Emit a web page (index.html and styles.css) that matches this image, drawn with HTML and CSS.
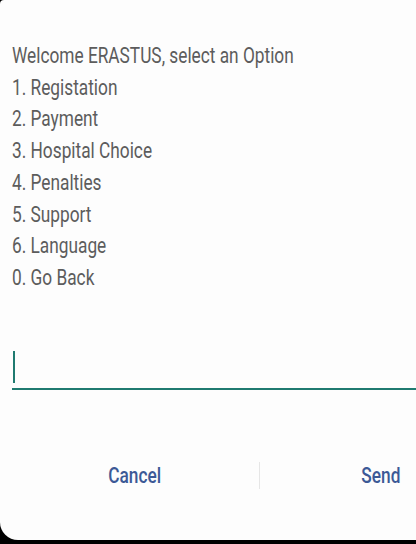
FILE: index.html
```html
<!DOCTYPE html>
<html lang="en">
<head>
    <meta charset="UTF-8">
    <title>USSD Menu</title>
    <link rel="stylesheet" href="styles.css">
</head>
<body>
    <div id="ussdDialog">
        <div class="menuText">
            <p>Welcome ERASTUS, select an Option</p>
            <p>1. Registation</p>
            <p>2. Payment</p>
            <p>3. Hospital Choice</p>
            <p>4. Penalties</p>
            <p>5. Support</p>
            <p>6. Language</p>
            <p>0. Go Back</p>
        </div>

        <div class="replyField">
            <span class="caret"></span>
        </div>

        <div class="dialogButtons">
            <button class="cancelBtn"><span>Cancel</span></button>
            <span class="divider"></span>
            <button class="sendBtn"><span>Send</span></button>
        </div>
    </div>
</body>
</html>
```

FILE: styles.css
```css
body {
    margin: 0;
    background-color: #000;
    font-family: 'Roboto', 'Liberation Sans', sans-serif;
    overflow: hidden;
    height: 544px;
}

#ussdDialog {
    background-color: #fdfdfd;
    width: 510px;
    height: 540px;
    border-radius: 4px 0 0 18px;
    padding-top: 40px;
    box-sizing: border-box;
}

/* the capture is squeezed sideways, so text is narrowed to match */
.menuText {
    padding-left: 12px;
    transform: scaleX(0.785);
    transform-origin: 12px top;
}

.menuText p {
    margin: 0;
    font-size: 22px;
    line-height: 31.7px;
    color: #5c5c5c;
    white-space: nowrap;
}

.replyField {
    margin: 56px 0 0 12px;
    height: 38px;
    border-bottom: 2px solid #1f7a70;
    display: flex;
    align-items: flex-end;
}

.caret {
    display: block;
    width: 2px;
    height: 32px;
    margin-left: 1px;
    margin-bottom: 5px;
    background-color: #1f7a70;
}

.dialogButtons {
    display: flex;
    align-items: center;
    margin-top: 71px;
}

.dialogButtons button {
    background: none;
    border: none;
    font-family: 'Roboto', 'Liberation Sans', sans-serif;
    font-size: 22px;
    font-weight: 500;
    color: #3c5996;
    padding: 0;
    height: 30px;
    line-height: 30px;
}

.dialogButtons button span {
    display: inline-block;
    transform: scaleX(0.785);
}

.cancelBtn {
    width: 259px;
    padding-left: 11px !important;
}

.sendBtn {
    width: 242px;
}

.divider {
    width: 1px;
    height: 27px;
    background-color: #e6e6e6;
}
```
